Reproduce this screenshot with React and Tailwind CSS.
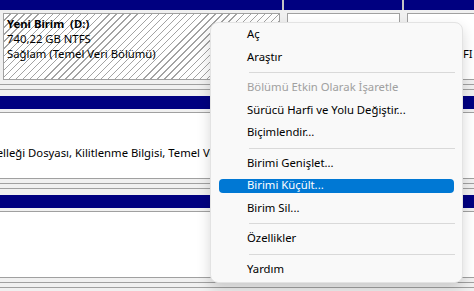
import React from "react";

const menuItems = [
  { label: "Aç" },
  { label: "Araştır" },
  { sep: true },
  { label: "Bölümü Etkin Olarak İşaretle", disabled: true },
  { label: "Sürücü Harfi ve Yolu Değiştir..." },
  { label: "Biçimlendir..." },
  { sep: true },
  { label: "Birimi Genişlet..." },
  { label: "Birimi Küçült...", active: true },
  { label: "Birim Sil..." },
  { sep: true },
  { label: "Özellikler" },
  { sep: true },
  { label: "Yardım" },
];

// one partition: navy header strip + framed box
function Partition({ className = "", hatched, lines = [] }) {
  return (
    <div className={`flex flex-none flex-col ${className}`}>
      <div className="h-[13px] bg-[#000080]" />
      <div className="pt-[3px] pl-[3px] pr-[2px]">
        <div
          className={`h-[67px] overflow-hidden whitespace-pre border border-[#a0a0a0] px-[3px] pt-[2px] leading-[15px] text-black ${
            hatched
              ? "bg-[repeating-linear-gradient(135deg,#ffffff_0px,#ffffff_4px,#a3a3a3_4px,#a3a3a3_5px)]"
              : "bg-white"
          }`}
        >
          {lines.map((l, i) => (
            <div key={i} className={`h-[15px] ${i === 0 ? "font-bold" : ""}`}>
              {l}
            </div>
          ))}
        </div>
      </div>
    </div>
  );
}

function Divider() {
  return (
    <div className="w-[2px] flex-none">
      <div className="h-[13px] bg-[#c4c4c4]" />
    </div>
  );
}

function DiskRow({ children, className = "" }) {
  return (
    <div className={`flex flex-col ${className}`}>
      <div className="flex h-[83px]">{children}</div>
      <div className="mt-[4px] mb-[6px] h-[6px] border-y border-[#a0a0a0]" />
    </div>
  );
}

function ContextMenu() {
  return (
    <div className="absolute left-[210px] top-[22px] w-[253px] rounded-[8px] border border-[#e3e3e3] bg-[#f9f9f9] pt-[0.5px] pb-[1px] shadow-[0_6px_14px_rgba(0,0,0,0.16)]">
      {menuItems.map((it, i) =>
        it.sep ? (
          <div key={i} className="flex h-[8px] items-center pl-[38px] pr-[7px]">
            <div className="h-px w-full bg-[#d9d9d9]" />
          </div>
        ) : (
          <div key={i} className="px-[8px] py-[4.25px]">
            <div
              className={`flex h-[14px] items-center rounded-[4px] pl-[28px] ${
                it.active
                  ? "bg-[#0078d4] text-white"
                  : it.disabled
                  ? "text-[#a0a0a0]"
                  : "text-black"
              }`}
            >
              {it.label}
            </div>
          </div>
        )
      )}
    </div>
  );
}

export default function App() {
  return (
    <div className="relative h-[291px] w-[474px] overflow-hidden bg-[#f0f0f0] font-['Segoe_UI','Noto_Sans',sans-serif] text-[11.3px]">
      <div className="-mt-[3px] flex flex-col">
        <DiskRow>
          <Partition
            className="w-[282px]"
            hatched
            lines={["Yeni Birim  (D:)", "740,22 GB NTFS", "Sağlam (Temel Veri Bölümü)"]}
          />
          <Divider />
          <Partition className="w-[118px]" lines={["", "499 MB", "Sağlam (Kurtarma Bölümü)"]} />
          <Divider />
          <Partition className="w-[200px]" lines={["", "100 MB", "Sağlam (EFI Sistem Bölümü)"]} />
        </DiskRow>
        <DiskRow>
          <Partition
            className="-ml-[187px] w-[700px]"
            lines={[
              "(C:)",
              "237,27 GB NTFS",
              "Sağlam (Önyükleme, Sayfa Disk Belleği Dosyası, Kilitlenme Bilgisi, Temel Veri Bölümü)",
            ]}
          />
        </DiskRow>
        <DiskRow>
          <Partition className="-ml-[187px] w-[700px]" lines={["", "", ""]} />
        </DiskRow>
      </div>
      <ContextMenu />
    </div>
  );
}
